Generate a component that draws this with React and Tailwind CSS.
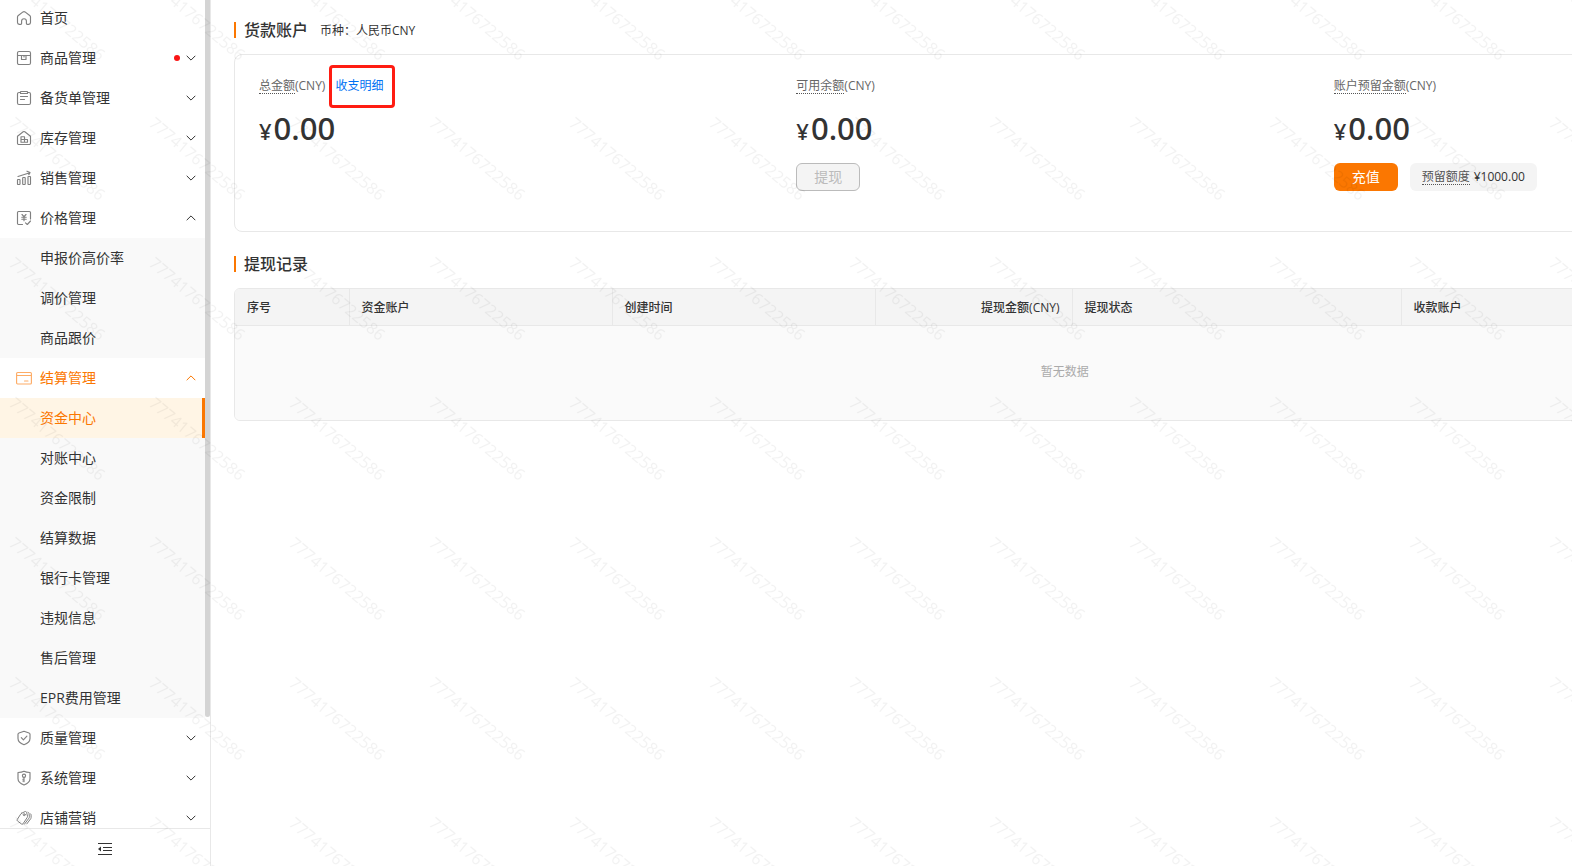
import { useState } from "react";

const strokeProps = {
  width: 16,
  height: 16,
  viewBox: "0 0 16 16",
  fill: "none",
  stroke: "currentColor",
  strokeWidth: 1.15,
  strokeLinecap: "round",
  strokeLinejoin: "round",
  "aria-hidden": true,
};

const icons = {
  home: (
    <svg {...strokeProps}>
      <path d="M3.2 14.3h1.6c.5 0 .8-.3.8-.8v-2.4a2.4 2.4 0 0 1 4.8 0v2.4c0 .5.3.8.8.8h1.6c1 0 1.7-.7 1.7-1.7V6.9c0-.6-.3-1.1-.8-1.4L9 1.9c-.6-.4-1.4-.4-2 0L2.3 5.5c-.5.3-.8.8-.8 1.4v5.7c0 1 .7 1.7 1.7 1.7Z" />
    </svg>
  ),
  goods: (
    <svg {...strokeProps}>
      <rect x="1.5" y="1.5" width="13" height="13" rx="1.5" />
      <path d="M1.5 5.5h13M5.5 5.5v4H10v-4M8 5.5V7" />
    </svg>
  ),
  stock: (
    <svg {...strokeProps}>
      <path d="M4.5 2.5H3A1.5 1.5 0 0 0 1.5 4v9A1.5 1.5 0 0 0 3 14.5h10a1.5 1.5 0 0 0 1.5-1.5V4A1.5 1.5 0 0 0 13 2.5h-1.5" />
      <path d="M5 1.5h6c.3 0 .5.2.5.5v1.5h-7V2c0-.3.2-.5.5-.5ZM4.5 6.5h7M4.5 9.5h4" />
    </svg>
  ),
  warehouse: (
    <svg {...strokeProps}>
      <path d="M1.5 6.2 7.2 1.8a1.3 1.3 0 0 1 1.6 0l5.7 4.4v7a1.3 1.3 0 0 1-1.3 1.3H2.8a1.3 1.3 0 0 1-1.3-1.3Z" />
      <path d="M5 12.2V6.7h3.5v5.5M5 9.5h6.5v2.7H5" />
    </svg>
  ),
  sales: (
    <svg {...strokeProps}>
      <rect x="1.5" y="9.5" width="2.5" height="5" rx=".5" />
      <rect x="6.7" y="7.5" width="2.5" height="7" rx=".5" />
      <rect x="12" y="6.5" width="2.5" height="8" rx=".5" />
      <path d="M2 6.5 13.8 2.7M11 1.2l3 1.4-1.2 2" />
    </svg>
  ),
  price: (
    <svg {...strokeProps}>
      <path d="M6.5 14.5h-4a1 1 0 0 1-1-1v-11a1 1 0 0 1 1-1h11a1 1 0 0 1 1 1V9M9.5 12.8l1.8 1.7 3.2-3.5" />
      <path d="m6 4.5 2 2.2 2-2.2M8 6.7v4M5.8 7.2h4.4M5.8 9.2h4.4" />
    </svg>
  ),
  card: (
    <svg {...strokeProps}>
      <rect x=".6" y="2.5" width="14.8" height="11.5" rx="1" />
      <path d="M.6 5.5h14.8M8.5 11H12" />
    </svg>
  ),
  quality: (
    <svg {...strokeProps}>
      <path d="M8 1.3 13 3c.6.2 1 .7 1 1.3v4.2c0 3-2.4 4.9-6 6.2-3.6-1.3-6-3.2-6-6.2V4.3C2 3.7 2.4 3.2 3 3Z" />
      <path d="m5.3 7.7 2.1 2.1 3.5-3.6" />
    </svg>
  ),
  system: (
    <svg {...strokeProps}>
      <path d="M2 2.5c2.2 0 4.3-.3 6-1.2 1.7.9 3.8 1.2 6 1.2v6.2c0 3-2.7 5-6 6.3-3.3-1.3-6-3.3-6-6.3Z" />
      <circle cx="8" cy="5.7" r="1.6" />
      <path d="M8 7.3v4.4M8 9.2H6.8M8 11H6.8" />
    </svg>
  ),
  marketing: (
    <svg {...strokeProps} strokeWidth={1}>
      <path d="M5.5 3.3 9 1.6c.7-.3 1.4 0 1.6.8l.9 3.7c.1.5 0 1-.3 1.4L7 13.8c-.4.5-1 .6-1.5.2l-4-3c-.5-.4-.6-1-.2-1.6l3.4-5.3c.2-.3.5-.6.8-.8Z" />
      <circle cx="8.2" cy="4.7" r="1" />
      <path d="M12 2.2c.6.2.9.6 1 1.2l.4 3.3c0 .5-.1 1-.4 1.4l-4.5 6M14.3 3.7c.6.3.8.8.8 1.4v2.500c0 .5-.2.9-.5 1.300l-3.800 5" />
    </svg>
  ),
};

const menu = [
  { id: "home", label: "首页", link: true },
  { id: "goods", label: "商品管理", dot: true },
  { id: "stock", label: "备货单管理" },
  { id: "warehouse", label: "库存管理" },
  { id: "sales", label: "销售管理" },
  { id: "price", label: "价格管理", children: ["申报价高价率", "调价管理", "商品跟价"] },
  {
    id: "card",
    label: "结算管理",
    children: ["资金中心", "对账中心", "资金限制", "结算数据", "银行卡管理", "违规信息", "售后管理", "EPR费用管理"],
  },
  { id: "quality", label: "质量管理" },
  { id: "system", label: "系统管理" },
  { id: "marketing", label: "店铺营销" },
];

const Chevron = ({ up }) => (
  <svg width="10" height="6" viewBox="0 0 10 6" fill="none" stroke="currentColor" aria-hidden="true">
    <path d={up ? "M.7 5.2 5 .9l4.3 4.3" : "M.7.8 5 5.1 9.3.8"} />
  </svg>
);

const MenuGroup = ({ item, open, active, current, onToggle, onSelect }) => (
  <li>
    {item.link ? (
      <a href="#home" className="flex h-10 items-center px-4">
        <span className="mr-2 text-[#808080]">{icons[item.id]}</span>
        {item.label}
      </a>
    ) : (
      <button
        type="button"
        aria-expanded={open}
        onClick={() => onToggle(item.id)}
        className={`flex h-10 w-full items-center pr-[9px] pl-4 text-left ${active ? "text-[#fb7701]" : ""}`}
      >
        <span className={active ? "mr-2 text-[#fdac66]" : "mr-2 text-[#808080]"}>{icons[item.id]}</span>
        <span className="flex-1">{item.label}</span>
        {item.dot ? <span className="mr-[6px] size-[6px] rounded-full bg-[#fa1414]" /> : null}
        <Chevron up={open} />
      </button>
    )}
    {open && item.children ? (
      <ul className="bg-[#f9f9f9]">
        {item.children.map((child) => (
          <li key={child}>
            <a
              href="#menu"
              onClick={() => onSelect(child)}
              className={`flex h-10 items-center pl-10 ${
                child === current ? "border-r-3 border-[#fb7701] bg-[#fff5e5] text-[#fb7701]" : ""
              }`}
            >
              {child}
            </a>
          </li>
        ))}
      </ul>
    ) : null}
  </li>
);

const Sidebar = () => {
  const [opened, setOpened] = useState(["price", "card"]);
  const [current, setCurrent] = useState("资金中心");

  const toggle = (id) => {
    setOpened((prev) => (prev.includes(id) ? prev.filter((key) => key !== id) : [...prev, id]));
  };

  return (
    <aside className="flex w-[211px] shrink-0 flex-col border-r border-[#e8e8e8] text-sm">
      <div className="relative min-h-0 flex-1 overflow-hidden pr-[5px]">
        <nav>
          <ul className="-mt-[2px]">
            {menu.map((item) => (
              <MenuGroup
                key={item.id}
                item={item}
                open={opened.includes(item.id)}
                active={Boolean(item.children?.includes(current))}
                current={current}
                onToggle={toggle}
                onSelect={setCurrent}
              />
            ))}
          </ul>
        </nav>
        <div className="absolute top-0 right-0 bottom-[111px] w-[5px] rounded-b-full bg-[#d4d4d4]" />
      </div>
      <div className="flex h-[38px] items-center justify-center border-t border-[#e8e8e8] pt-[2px]">
        <button type="button" aria-label="收起菜单">
          <svg width="14" height="14" viewBox="0 0 14 14" fill="none" stroke="currentColor" aria-hidden="true">
            <path d="M0 1.5h14M5 5.5h9M5 8.5h9M0 12.5h14" />
            <path d="M3 4.5v5L0 7Z" fill="currentColor" stroke="none" />
          </svg>
        </button>
      </div>
    </aside>
  );
};

const SectionTitle = ({ children, note }) => (
  <div className="flex h-6 items-center">
    <span className="mr-2 h-4 w-[2px] bg-[#fb7701]" />
    <h2 className="text-base font-medium">{children}</h2>
    {note ? <span className="ml-3 pt-[2px] text-xs">{note}</span> : null}
  </div>
);

const Hint = ({ children }) => (
  <span className="inline-block h-4 border-b border-dotted border-[#555] leading-4">{children}</span>
);

const Balance = ({ label, link, children }) => (
  <div className="flex-1">
    <div className="flex h-4 items-center text-xs leading-4 text-[#666]">
      <Hint>{label}</Hint>
      <span>(CNY)</span>
      {link}
    </div>
    <div className="mt-[14px] flex h-10 items-baseline gap-[2px] font-['Noto_Sans',sans-serif] leading-10 font-medium">
      <span className="text-[22px]">¥</span>
      <span className="text-[31px]">0.00</span>
    </div>
    <div className="mt-[15px] flex h-7 gap-3">{children}</div>
  </div>
);

const Watermark = () => (
  <svg className="pointer-events-none fixed inset-0 size-full" aria-hidden="true">
    <defs>
      <pattern id="mark" x="0" y="-30" width="140" height="140" patternUnits="userSpaceOnUse">
        <text transform="translate(8 15) rotate(40)" x="0" y="0" fontSize="16" fill="#000" fillOpacity=".05">
          7774176722586
        </text>
      </pattern>
    </defs>
    <rect width="100%" height="100%" fill="url(#mark)" />
  </svg>
);

const App = () => {
  return (
    <div className="flex h-screen overflow-hidden bg-white font-['Open_Sans','Noto_Sans_CJK_SC',sans-serif] text-[#333]">
      <Sidebar />
      <main className="min-w-0 flex-1 overflow-hidden pt-[18px] pl-[23px]">
        <div className="min-w-[1662px]">
          <SectionTitle note="币种：人民币CNY">货款账户</SectionTitle>
          <section className="mt-3 flex rounded-lg border border-[#e8e8e8] px-6 pt-[23px] pb-10">
            <Balance
              label="总金额"
              link={
                <a href="#detail" className="relative ml-[10px] text-[#0071f3]">
                  收支明细
                  <span className="absolute -top-[13px] -right-[12px] -bottom-[14px] -left-[6px] rounded border-3 border-[#ff1c12]" />
                </a>
              }
            />
            <Balance label="可用余额">
              <button type="button" disabled className="w-16 rounded-md border border-[#bbb] bg-[#f4f4f4] text-sm text-[#bbb]">
                提现
              </button>
            </Balance>
            <Balance label="账户预留金额">
              <button type="button" className="w-16 rounded-md bg-[#fb7701] text-sm text-white">
                充值
              </button>
              <div className="flex items-center gap-1 rounded-md bg-[#f4f4f4] px-3 text-xs leading-4">
                <span className="text-[#555]">
                  <Hint>预留额度</Hint>
                </span>
                <span>¥1000.00</span>
              </div>
            </Balance>
          </section>

          <div className="mt-5">
            <SectionTitle>提现记录</SectionTitle>
          </div>
          <div className="mt-3 overflow-hidden rounded-md border border-[#e8e8e8]">
            <table className="w-full table-fixed text-left text-xs">
              <colgroup>
                <col className="w-[114px]" />
                <col className="w-[263px]" />
                <col className="w-[263px]" />
                <col className="w-[197px]" />
                <col className="w-[329px]" />
                <col />
              </colgroup>
              <thead className="bg-[#f4f4f4]">
                <tr className="h-9 border-b border-[#e8e8e8] [&>th]:border-r [&>th]:border-[#e8e8e8] [&>th]:px-3 [&>th]:pt-[2px] [&>th]:font-medium">
                  <th>序号</th>
                  <th>资金账户</th>
                  <th>创建时间</th>
                  <th className="text-right">
                    提现金额<span className="font-normal">(CNY)</span>
                  </th>
                  <th>提现状态</th>
                  <th>收款账户</th>
                </tr>
              </thead>
              <tbody className="bg-[#fafafa]">
                <tr>
                  <td colSpan={6} className="h-[95px] pb-[2px] text-center text-[#aaa]">
                    暂无数据
                  </td>
                </tr>
              </tbody>
            </table>
          </div>
        </div>
      </main>
      <Watermark />
    </div>
  );
};

export default App;
